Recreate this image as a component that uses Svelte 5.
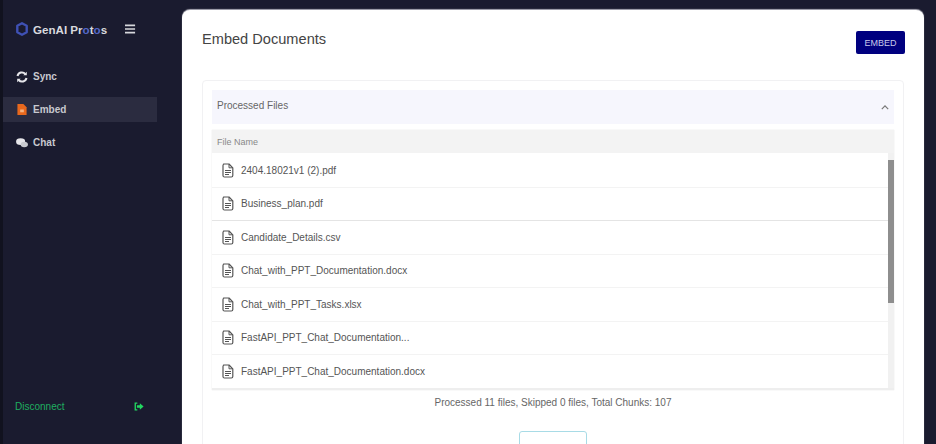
<script>
  const files = [
    '2404.18021v1 (2).pdf',
    'Business_plan.pdf',
    'Candidate_Details.csv',
    'Chat_with_PPT_Documentation.docx',
    'Chat_with_PPT_Tasks.xlsx',
    'FastAPI_PPT_Chat_Documentation...',
    'FastAPI_PPT_Chat_Documentation.docx'
  ];
</script>

<div class="shell">
  <aside class="sidebar">
    <div class="brand">
      <svg class="logo" viewBox="0 0 12 14" width="12" height="14"><path d="M6 1.300 10.700 3.800v6.400L6 12.700 1.300 10.200V3.800Z" fill="none" stroke="#3f51b5" stroke-width="2.400" stroke-linejoin="round"/></svg>
      <span class="brand-name">GenAI Pr<span class="blue">o</span>t<span class="blue">o</span>s</span>
      <svg class="burger" viewBox="0 0 12 10" width="11" height="10"><path d="M0 1h11M0 5h11M0 9h11" stroke="#d6d7dc" stroke-width="1.800"/></svg>
    </div>
    <nav class="nav">
      <div class="item">
        <svg viewBox="0 0 12 12" width="12" height="12"><path d="M1.500 5A4.500 4.500 0 0 1 9.300 3M10.500 7A4.500 4.500 0 0 1 2.700 9" fill="none" stroke="#e6e6ea" stroke-width="2"/><path d="M10.800 .8v3.500H7.300ZM1.200 11.200V7.700h3.500Z" fill="#e6e6ea"/></svg>
        <span>Sync</span>
      </div>
      <div class="item active">
        <svg viewBox="0 0 10 12" width="9" height="11"><path d="M0 0h6.500L10 3.500V12H0Z" fill="#e8681d"/><rect x="3" y="6" width="4" height="3" fill="#f6b27e"/></svg>
        <span>Embed</span>
      </div>
      <div class="item">
        <svg viewBox="0 0 13 11" width="12" height="10"><ellipse cx="5" cy="4" rx="5" ry="3.600" fill="#e6e6ea"/><ellipse cx="9" cy="7.200" rx="4" ry="3" fill="#c9cad0"/></svg>
        <span>Chat</span>
      </div>
    </nav>
    <div class="disconnect">
      <span>Disconnect</span>
      <svg viewBox="0 0 12 10" width="10" height="9"><path d="M4 1H1.500v8H4" fill="none" stroke="#22d760" stroke-width="1.600"/><path d="M3.500 3.500H7V1l4.500 4L7 9V6.500H3.500Z" fill="#22d760"/></svg>
    </div>
  </aside>

  <main class="card">
    <header class="head">
      <h1>Embed Documents</h1>
      <button class="embed">EMBED</button>
    </header>

    <section class="panel">
      <div class="summary">
        <span class="summary-title">Processed Files</span>
        <svg viewBox="0 0 10 6" width="8" height="5"><path d="M1 5l4-4 4 4" fill="none" stroke="#777" stroke-width="1.500"/></svg>
      </div>
      <div class="table">
        <div class="th">File Name</div>
        <div class="body">
          <div class="rows">
            {#each files as f}
              <div class="row">
                <svg viewBox="0 0 12 15" width="12" height="15"><path d="M1.500 1h5.500L10.800 4.800V12.500q0 1.500-1.500 1.500h-6.800q-1.500 0-1.500-1.500V2.500q0-1.500 1.500-1.500Z" fill="none" stroke="#555" stroke-width="1.200" stroke-linejoin="round"/><path d="M7 1v3.800h3.800M3 7.500h6M3 9.500h6M3 11.500h4" fill="none" stroke="#555" stroke-width="1"/></svg>
                <span>{f}</span>
              </div>
            {/each}
          </div>
          <div class="scroll"><div class="thumb"></div></div>
        </div>
      </div>
      <p class="status">Processed 11 files, Skipped 0 files, Total Chunks: 107</p>
      <div class="action"><button class="outline"></button></div>
    </section>
  </main>
</div>

<style>
  :global(body) {
    margin: 0;
    background: #1a1b2f;
    overflow: hidden;
  }
  .shell {
    display: flex;
    height: 444px;
    width: 936px;
    overflow: hidden;
    font-family: "Liberation Sans", Arial, sans-serif;
    background: #1a1b2f;
  }
  .sidebar {
    box-sizing: border-box;
    width: 182px;
    flex: none;
    padding: 0 25px 0 0;
    border-left: 3px solid #11121f;
    display: flex;
    flex-direction: column;
  }
  .brand {
    display: flex;
    align-items: center;
    height: 58px;
    padding-left: 13px;
    color: #d8d9de;
    font-size: 11.600px;
    font-weight: 700;
  }
  .brand-name { margin-left: 5px; width: 92px; white-space: nowrap; }
  .blue { color: #5468c8; }
  .nav {
    margin-top: 6px;
    display: flex;
    flex-direction: column;
  }
  .item {
    display: flex;
    align-items: center;
    height: 25px;
    margin-bottom: 8px;
    padding-left: 13px;
    gap: 5px;
    color: #c8c9cf;
    font-size: 10px;
    font-weight: 700;
  }
  .item svg { width: 12px; flex: none; }
  .item.active { background: #2b2c40; }
  .disconnect {
    margin-top: auto;
    margin-bottom: 32px;
    padding: 0 13px 0 12px;
    display: flex;
    align-items: center;
    justify-content: space-between;
    color: #1fae60;
    font-size: 10px;
  }
  .card {
    box-sizing: border-box;
    width: 742px;
    height: 470px;
    flex: none;
    margin-top: 10px;
    background: #fff;
    border-radius: 8px;
    padding: 20px;
    box-shadow: 0 -1px 1px #aaaab5;
  }
  .head {
    display: flex;
    justify-content: space-between;
    align-items: flex-start;
    height: 50px;
  }
  h1 {
    margin: 0;
    font-size: 14.600px;
    line-height: 18px;
    font-weight: 400;
    color: #444;
  }
  .embed {
    width: 49px;
    height: 23px;
    margin: 1px -1px 0 0;
    padding: 0;
    border: none;
    border-radius: 2px;
    background: #00007f;
    color: #c9c9ea;
    font: 400 9px "Liberation Sans", Arial, sans-serif;
  }
  .panel {
    box-sizing: border-box;
    height: 370px;
    border: 1px solid #f1f1f3;
    border-radius: 4px;
    padding: 9px;
  }
  .summary {
    display: flex;
    justify-content: space-between;
    align-items: center;
    height: 34px;
    padding: 0 5px 0 5px;
    background: #f6f6fd;
    color: #666;
    font-size: 10px;
  }
  .summary-title { margin-bottom: 3px; }
  .table {
    margin-top: 6px;
    border-bottom: 2px solid #eee;
    box-shadow: 0 0 1px #ddd;
  }
  .th {
    height: 23px;
    line-height: 25px;
    padding-left: 5px;
    background: #f3f3f3;
    color: #888;
    font-size: 9px;
  }
  .body {
    display: flex;
    height: 235px;
  }
  .rows { flex: 1; padding-top: 1px; }
  .row {
    box-sizing: border-box;
    display: flex;
    align-items: center;
    gap: 7px;
    height: 33.500px;
    padding-left: 10px;
    border-bottom: 1px solid #f3f3f3;
    color: #555;
    font-size: 10px;
  }
  .row:last-child { border-bottom: none; }
  .row:nth-child(2) { border-bottom-color: #e4e4e4; }
  .scroll {
    width: 6px;
    padding-top: 7px;
    background: #f1f1f1;
  }
  .thumb {
    height: 143px;
    background: #8e8e8e;
  }
  .status {
    margin: 7px 0 0;
    text-align: center;
    color: #666;
    font-size: 10px;
    line-height: 12px;
  }
  .action {
    display: flex;
    justify-content: center;
    margin-top: 22px;
  }
  .outline {
    width: 68px;
    height: 30px;
    padding: 0;
    background: #fff;
    border: 1px solid #a8dbe6;
    border-radius: 3px;
  }
</style>
